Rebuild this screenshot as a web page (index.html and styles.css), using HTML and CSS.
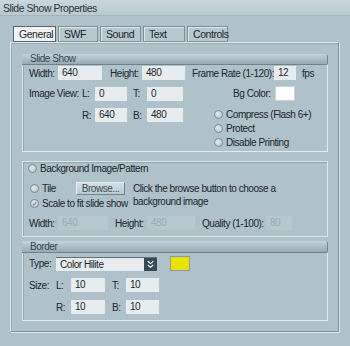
FILE: index.html
```html
<!DOCTYPE html>
<html lang="en">
<head>
    <meta charset="UTF-8" />
    <title>Slide Show Properties</title>
    <link rel="stylesheet" href="styles.css">
</head>
<body>

<div class="window">
    <!-- ===== Title bar ===== -->
    <header class="titlebar">Slide Show Properties</header>

    <!-- ===== Tabs ===== -->
    <nav class="tabs">
        <span class="tab tab-general active">General</span>
        <span class="tab tab-swf">SWF</span>
        <span class="tab tab-sound">Sound</span>
        <span class="tab tab-text">Text</span>
        <span class="tab tab-controls">Controls</span>
    </nav>

    <main class="panel">

        <!-- ────────── Slide Show ────────── -->
        <section class="group group-show">
            <div class="group-head">Slide Show</div>

            <div class="row row-size">
                <span class="lbl w-width">Width:</span>
                <span class="field f-width">640</span>
                <span class="lbl w-height">Height:</span>
                <span class="field f-height">480</span>
                <span class="lbl w-rate">Frame Rate (1-120):</span>
                <span class="field f-rate">12</span>
                <span class="lbl w-fps">fps</span>
            </div>

            <div class="row row-view">
                <span class="lbl w-view">Image View:</span>
                <span class="lbl w-l">L:</span>
                <span class="field f-l">0</span>
                <span class="lbl w-t">T:</span>
                <span class="field f-t">0</span>
                <span class="lbl w-bg">Bg Color:</span>
                <span class="swatch swatch-white"></span>
            </div>

            <div class="row row-rb">
                <div class="rb-fields">
                    <span class="lbl w-l">R:</span>
                    <span class="field f-l">640</span>
                    <span class="lbl w-t">B:</span>
                    <span class="field f-t">480</span>
                </div>
                <div class="radio-list">
                    <label class="radio-line"><span class="radio"></span>Compress (Flash 6+)</label>
                    <label class="radio-line"><span class="radio"></span>Protect</label>
                    <label class="radio-line"><span class="radio"></span>Disable Printing</label>
                </div>
            </div>
        </section>

        <!-- ────────── Background image ────────── -->
        <section class="group group-bg">
            <label class="radio-line bg-title"><span class="radio"></span>Background Image/Pattern</label>

            <div class="bg-options">
                <div class="bg-left">
                    <div class="radio-line tile-line">
                        <span class="radio"></span>Tile
                        <span class="btn">Browse...</span>
                    </div>
                    <label class="radio-line"><span class="radio checked">
                        <svg viewBox="0 0 9 9" fill="none" stroke="#7d8c93" stroke-width="1.3"><path d="M2.2 4.6 L3.9 6.3 L6.9 2.6"/></svg>
                    </span>Scale to fit slide show</label>
                </div>
                <p class="bg-hint">Click the browse button to choose a<br>background image</p>
            </div>

            <div class="row row-dim">
                <span class="lbl w-width">Width:</span>
                <span class="field off f-dimw">640</span>
                <span class="lbl w-dimh">Height:</span>
                <span class="field off f-dimh">480</span>
                <span class="lbl w-qual">Quality (1-100):</span>
                <span class="field off f-qual">80</span>
            </div>
        </section>

        <!-- ────────── Border ────────── -->
        <section class="group group-border">
            <div class="group-head">Border</div>

            <div class="row row-type">
                <span class="lbl w-type">Type:</span>
                <span class="select">
                    <span class="select-text">Color Hilite</span>
                    <span class="select-btn">
                        <svg viewBox="0 0 12 12" fill="none" stroke="#fff" stroke-width="1.2"><path d="M3 2.5 L6 5 L9 2.5 M3 6.5 L6 9 L9 6.5"/></svg>
                    </span>
                </span>
                <span class="swatch swatch-yellow"></span>
            </div>

            <div class="row row-bsize">
                <span class="lbl w-type">Size:</span>
                <span class="lbl w-bl">L:</span>
                <span class="field f-bl">10</span>
                <span class="lbl w-bt">T:</span>
                <span class="field f-bt">10</span>
            </div>

            <div class="row row-bsize2">
                <span class="lbl w-type"></span>
                <span class="lbl w-bl">R:</span>
                <span class="field f-bl">10</span>
                <span class="lbl w-bt">B:</span>
                <span class="field f-bt">10</span>
            </div>
        </section>
    </main>
</div>

</body>
</html>
```

FILE: styles.css
```css
/* ─────────── Base ─────────── */
* { box-sizing: border-box; }

body{
    margin:0;
    font-family:"Liberation Sans", Arial, sans-serif;
    font-size:10px;
    letter-spacing:-0.45px;
    color:#1c262b;
    background:#afc1c9;
}

.window{
    width:350px;
    height:346px;
    overflow:hidden;
    background:#afc1c9;
}

/* ─────────── Title bar ─────────── */
.titlebar{
    height:16px;
    padding:2px 0 0 3px;
    line-height:12px;
    font-size:10.5px;
    color:#2a3338;
    background:linear-gradient(#cad7dc, #b9c9d0);
    border-bottom:1px solid #a2b4bc;
}

/* ─────────── Tabs ─────────── */
.tabs{
    display:flex;
    gap:2px;
    margin:10px 0 0 13px;
    height:16px;
}
.tab{
    height:16px;
    padding:1px 0 0 5px;
    line-height:13px;
    font-size:10.5px;
    background:#b6c7ce;
    border:1px solid #7f9099;
    box-shadow:inset 1px 1px 0 #dde6ea;
}
.tab.active{
    background:#f1f4f5;
    border-color:#56666e;
    box-shadow:none;
}
.tab-general{ width:43px; }
.tab-swf{ width:40px; }
.tab-sound{ width:41px; }
.tab-text{ width:42px; }
.tab-controls{ width:41px; }

/* ─────────── Panel & groups ─────────── */
.panel{
    margin-left:10px;
    width:329px;
    height:290px;
    padding:11px 0 0 11px;
    border:1px solid #e1e9ec;
    border-right-color:#7c8e97;
    border-bottom-color:#7c8e97;
    box-shadow:1px 1px 0 #e1e9ec, inset 1px 1px 0 #9aadb6;
}

.group{
    width:306px;
    border:1px solid #e0e8eb;
    box-shadow:inset 1px 1px 0 #93a6af;
}
.group-show{ height:98px; border-top:none; }
.group-bg{ height:76px; margin-top:9px; }
.group-border{ height:80px; margin-top:4px; border-top:none; }

.group-head{
    height:11px;
    margin-left:-1px;
    margin-right:-1px;
    padding-left:8px;
    line-height:10px;
    color:#34454d;
    background:linear-gradient(#c5d2d8, #a9bbc3 60%, #98abb4);
    border-bottom:1px solid #6f838c;
    border-right:1px solid #6f838c;
    border-radius:0 2px 2px 0;
}
.group-border .group-head{ height:12px; line-height:12px; }

/* ─────────── Rows ─────────── */
.row{
    display:flex;
    align-items:center;
    padding-left:6px;
}
.lbl{ flex:none; white-space:nowrap; }
.field{
    flex:none;
    height:14px;
    line-height:14px;
    padding-left:4px;
    background:#e7ecee;
}
.field.off{
    background:#b7c8cf;
    color:#98abb3;
}

.row-size{ margin-top:1px; }
.w-width{ width:29px; }
.f-width{ width:44px; }
.w-height{ width:32px; margin-left:8px; }
.f-height{ width:43px; }
.w-rate{ width:82px; margin-left:7px; }
.f-rate{ width:22px; }
.w-fps{ margin-left:6px; }

.row-view{ margin-top:6px; }
.w-view{ width:53px; }
.w-l{ width:13px; }
.f-l{ width:32px; }
.w-t{ width:14px; margin-left:6px; }
.f-t{ width:36px; }
.w-bg{ width:42px; margin-left:50px; }

.swatch{
    flex:none;
    width:20px;
    height:15px;
    border:1px solid #8a9ba3;
}
.swatch-white{ background:#fff; border-color:#c9d5da; }
.swatch-yellow{ background:#e6e400; margin-left:13px; }

.row-rb{
    align-items:flex-start;
    margin-top:6px;
    padding-left:59px;
}
.rb-fields{
    display:flex;
    align-items:center;
    margin-top:1px;
}
.radio-list{ margin-left:31px; }

/* ─────────── Radios ─────────── */
.radio-line{
    display:flex;
    align-items:center;
    height:14px;
    white-space:nowrap;
}
.radio{
    flex:none;
    width:9px;
    height:9px;
    margin-right:3px;
    border-radius:50%;
    border:1px solid #7b8c94;
    background:radial-gradient(circle at 40% 40%, #e3eaed, #b4c4cb);
}
.radio svg{ display:block; width:7px; height:7px; }

/* ─────────── Background image group ─────────── */
.bg-title{ margin:0 0 0 5px; height:12px; }
.bg-options{
    display:flex;
    margin-top:7px;
    padding-left:7px;
}
.bg-left{ width:103px; }
.tile-line{ height:15px; }
.btn{
    margin-left:auto;
    margin-right:8px;
    width:49px;
    height:13px;
    line-height:12px;
    text-align:center;
    color:#3a4a52;
    background:linear-gradient(#d5dfe3, #b9c9d0);
    border:1px solid #8295a0;
    border-color:#e6edf0 #71848d #71848d #e6edf0;
}
.bg-hint{
    margin:1px 0 0;
    line-height:13px;
}
.row-dim{ margin-top:6px; }
.f-dimw{ width:50px; }
.w-dimh{ width:32px; margin-left:7px; }
.f-dimh{ width:48px; }
.w-qual{ width:64px; margin-left:7px; }
.f-qual{ width:26px; }

/* ─────────── Border group ─────────── */
.row-type{ margin-top:3px; }
.w-type{ width:27px; }
.select{
    flex:none;
    display:flex;
    width:101px;
    height:14px;
    background:#e7ecee;
    border-top:1px solid #5f6f77;
}
.select-text{
    flex:1;
    padding-left:4px;
    line-height:13px;
}
.select-btn{
    width:13px;
    background:#3b4a52;
    display:flex;
    align-items:center;
    justify-content:center;
}
.select-btn svg{ width:11px; height:11px; }

.row-bsize{ margin-top:7px; }
.row-bsize2{ margin-top:8px; }
.w-bl{ width:15px; }
.f-bl{ width:34px; }
.w-bt{ width:14px; margin-left:7px; }
.f-bt{ width:33px; }
```
